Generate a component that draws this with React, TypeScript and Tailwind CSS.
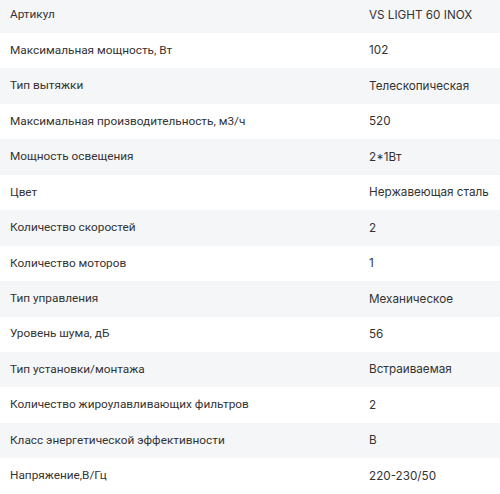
import React from "react";

const rows: [string, string][] = [
  ["Артикул", "VS LIGHT 60 INOX"],
  ["Максимальная мощность, Вт", "102"],
  ["Тип вытяжки", "Телескопическая"],
  ["Максимальная производительность, м3/ч", "520"],
  ["Мощность освещения", "2*1Вт"],
  ["Цвет", "Нержавеющая сталь"],
  ["Количество скоростей", "2"],
  ["Количество моторов", "1"],
  ["Тип управления", "Механическое"],
  ["Уровень шума, дБ", "56"],
  ["Тип установки/монтажа", "Встраиваемая"],
  ["Количество жироулавливающих фильтров", "2"],
  ["Класс энергетической эффективности", "B"],
  ["Напряжение,В/Гц", "220-230/50"],
];

export default function App() {
  return (
    <div className="w-[500px] h-[494px] overflow-hidden bg-white">
      <div className="-mt-[2.45px] flex flex-col">
        {rows.map(([k, v], i) => (
          <div
            key={i}
            className={`flex h-[35.45px] items-center text-[#333] ${i % 2 === 0 ? "bg-[#f5f6f8]" : "bg-white"}`}
          >
            <div className="w-[359px] pl-[10px] text-[11.8px] font-['Roboto',sans-serif]">{k}</div>
            <div className="pl-[10px] pt-[1px] text-[11.7px] whitespace-nowrap font-['Inter',sans-serif]">{v}</div>
          </div>
        ))}
      </div>
    </div>
  );
}
